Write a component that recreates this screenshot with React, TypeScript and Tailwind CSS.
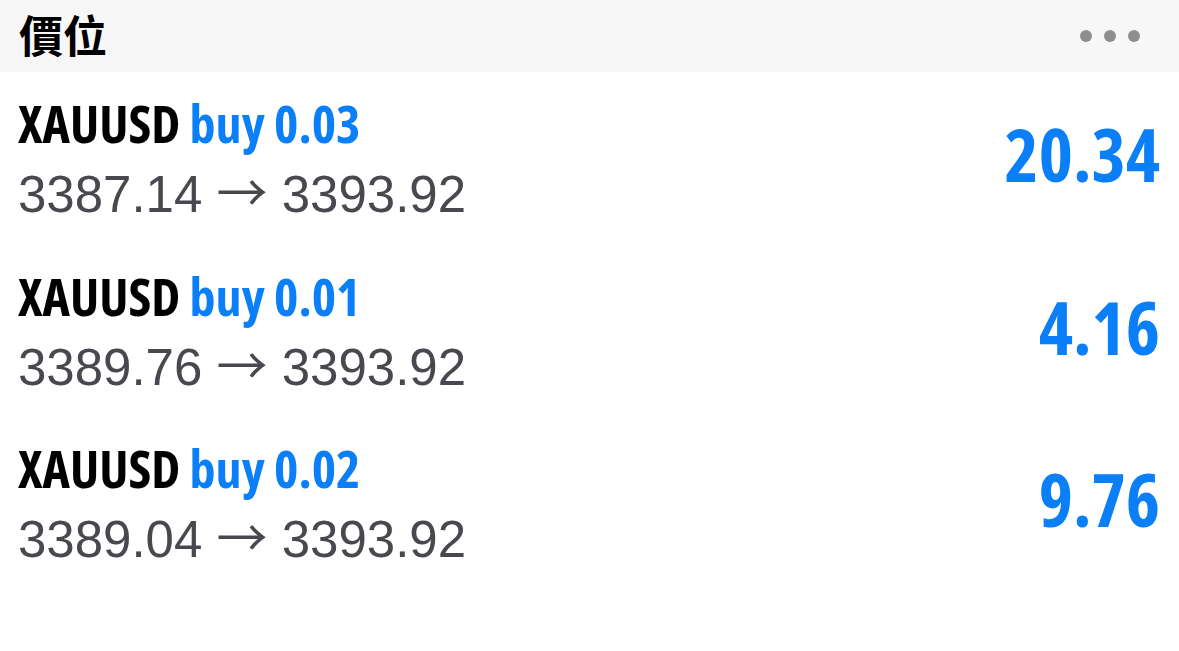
const rows = [
  { lots: '0.03', from: '3387.14', to: '3393.92', profit: '20.34' },
  { lots: '0.01', from: '3389.76', to: '3393.92', profit: '4.16' },
  { lots: '0.02', from: '3389.04', to: '3393.92', profit: '9.76' },
];

export default function App() {
  return (
    <div className="w-[1179px] h-[651px] bg-white overflow-hidden">
      <div className="h-[72px] bg-[#f7f7f7] flex items-center justify-between pl-[19px] pr-[39px]">
        <h1 className="text-[44px] leading-none font-bold text-black pb-1 font-['Noto_Sans_CJK_TC','Noto_Sans_CJK_SC',sans-serif]">
          價位
        </h1>
        <div className="flex gap-[12px] items-center">
          <span className="w-[12px] h-[12px] rounded-full bg-[#8e8e8e]" />
          <span className="w-[12px] h-[12px] rounded-full bg-[#8e8e8e]" />
          <span className="w-[12px] h-[12px] rounded-full bg-[#8e8e8e]" />
        </div>
      </div>
      <div className="flex flex-col gap-[44.5px] pt-[23px]">
        {rows.map((r, i) => (
          <div key={i} className="flex items-center justify-between pl-[18px] pr-[19px]">
            <div className="flex flex-col">
              <div className="h-[56px] leading-[56px] text-[52px] font-bold font-stretch-condensed font-['Open_Sans',sans-serif] whitespace-nowrap">
                <span className="text-black">XAUUSD</span>{' '}
                <span className="text-[#0a7ff7]">buy {r.lots}</span>
              </div>
              <div className="mt-[16px] h-[56px] leading-[56px] text-[51px] text-[#48484e] font-['Liberation_Sans',Arial,sans-serif] whitespace-nowrap">
                {r.from}{' '}
                <span className="leading-[40px] font-['Noto_Sans_CJK_JP',sans-serif]">→</span>{' '}
                {r.to}
              </div>
            </div>
            <div className="pb-[11px] text-[73px] leading-[73px] font-bold font-stretch-condensed text-[#0a7ff7] font-['Open_Sans',sans-serif]">
              {r.profit}
            </div>
          </div>
        ))}
      </div>
    </div>
  );
}
